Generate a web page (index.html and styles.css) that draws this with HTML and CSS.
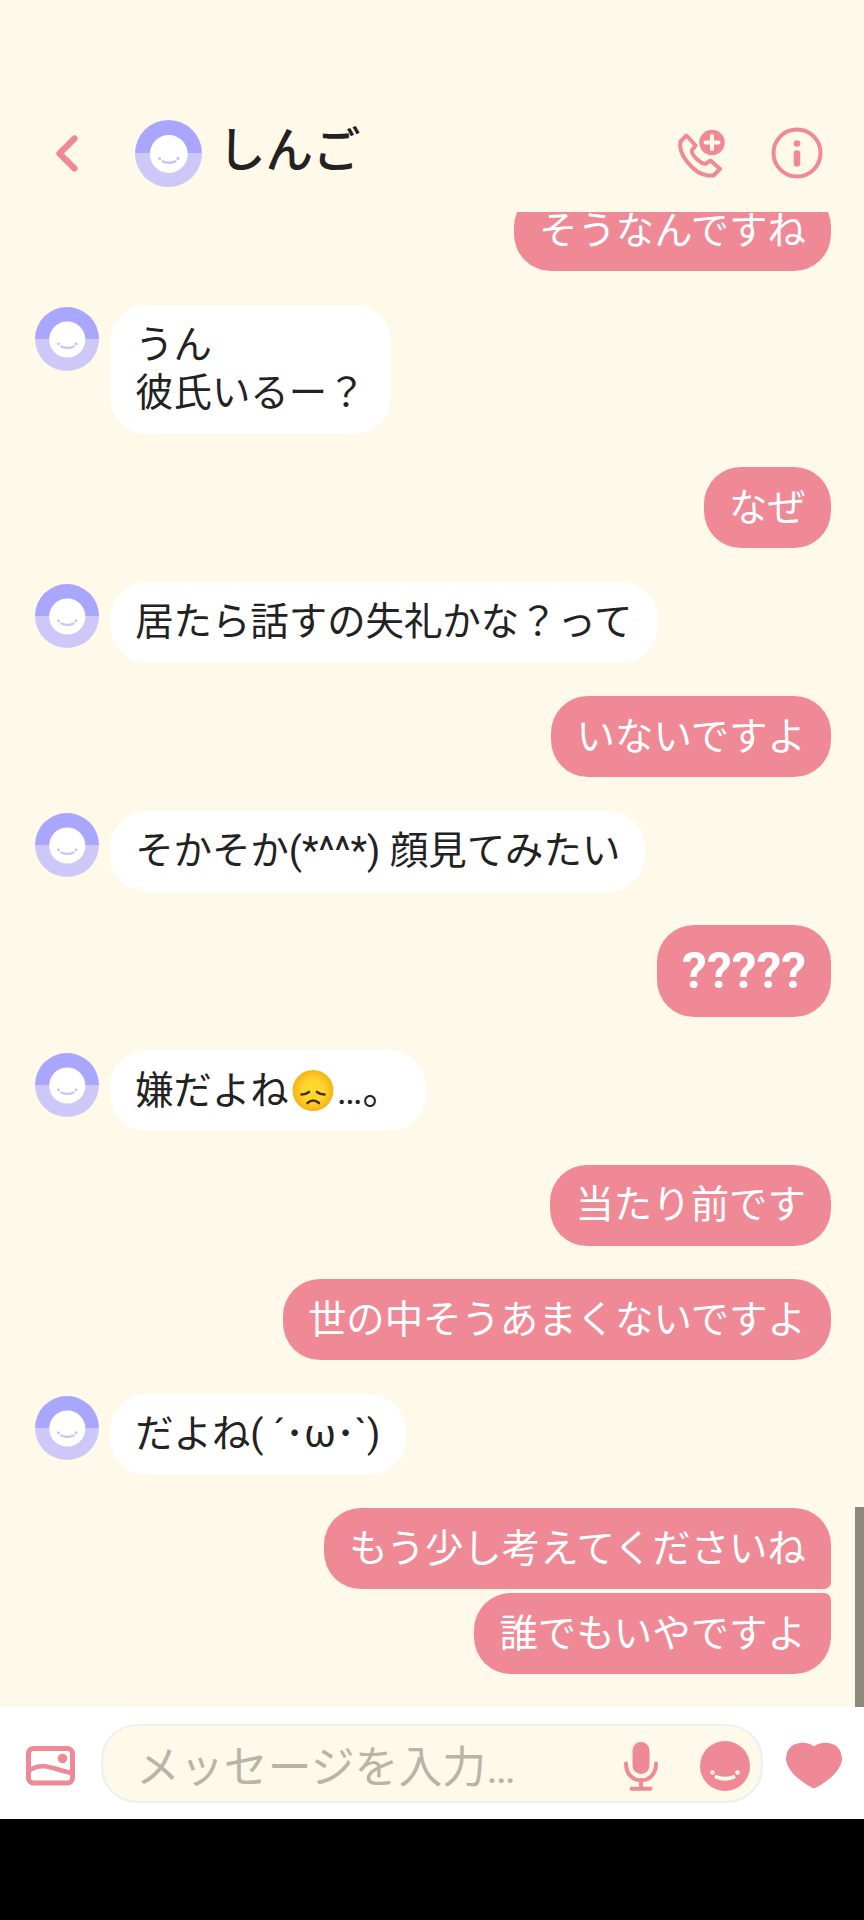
FILE: index.html
```
<!DOCTYPE html>
<html lang="ja">
<head>
<meta charset="utf-8">
<title>しんご</title>
<link rel="stylesheet" href="styles.css">
</head>
<body>
<svg class="defs" aria-hidden="true">
  <symbol id="avatar" viewBox="0 0 68 68">
    <path d="M0 34a34 34 0 0 1 68 0z" fill="#a9a6ff"/>
    <path d="M0 34a34 34 0 0 0 68 0z" fill="#cdc8f8"/>
    <circle cx="34.3" cy="34.5" r="19.2" fill="#fff"/>
    <circle cx="25" cy="39" r="1.6" fill="#c9c5fa"/>
    <circle cx="43.6" cy="39" r="1.6" fill="#c9c5fa"/>
    <path d="M28 42q6.300 3 13 0" fill="none" stroke="#c9c5fa" stroke-width="2.500" stroke-linecap="round"/>
  </symbol>
</svg>
<div class="app">
  <header class="header">
    <svg class="back" viewBox="0 0 22 37"><path d="M18.500 3.500L3.500 18.500l15 15" fill="none" stroke="#f08996" stroke-width="6.200" stroke-linecap="round" stroke-linejoin="round"/></svg>
    <svg class="header-avatar"><use href="#avatar"/></svg>
    <h1 class="name">しんご</h1>
    <svg class="call" viewBox="0 0 48 50">
      <path d="M8.500 5.500L2.500 11.500C-.5 24 16 44.500 30 45.500h5.500l6.500-6.500L32.500 30.500l-4.500 3.200C23 34.500 13.500 25 13.800 20.500L17.500 15.500z" fill="none" stroke="#f08996" stroke-width="4" stroke-linejoin="round"/>
      <circle cx="34" cy="12.500" r="14" fill="#fff9ea"/>
      <circle cx="34" cy="12.500" r="12.700" fill="#f08996"/>
      <path d="M34 6v13M27.500 12.500h13" stroke="#fff9ea" stroke-width="4" stroke-linecap="round"/>
    </svg>
    <svg class="info" viewBox="0 0 52 52">
      <circle cx="26" cy="26" r="23.500" fill="none" stroke="#f08996" stroke-width="4"/>
      <circle cx="26" cy="16.500" r="3.300" fill="#f08996"/>
      <path d="M26 26.500v10" stroke="#f08996" stroke-width="6.500" stroke-linecap="round"/>
    </svg>
  </header>

  <main class="thread">
    <div class="row mine"><p class="bubble">そうなんですね</p></div>
    <div class="row"><svg class="avatar"><use href="#avatar"/></svg><p class="bubble">うん<br>彼氏いるー？</p></div>
    <div class="row mine"><p class="bubble">なぜ</p></div>
    <div class="row"><svg class="avatar"><use href="#avatar"/></svg><p class="bubble">居たら話すの失礼かな？って</p></div>
    <div class="row mine"><p class="bubble">いないですよ</p></div>
    <div class="row"><svg class="avatar"><use href="#avatar"/></svg><p class="bubble">そかそか(*^^*) 顔見てみたい</p></div>
    <div class="row mine"><p class="bubble large">?????</p></div>
    <div class="row"><svg class="avatar"><use href="#avatar"/></svg><p class="bubble">嫌だよね<svg class="emoji" viewBox="0 0 42 42" role="img" aria-label="がっかり">
      <defs><radialGradient id="face"><stop offset=".5" stop-color="#ffd72e"/><stop offset="1" stop-color="#f5b316"/></radialGradient></defs>
      <circle cx="21" cy="20.500" r="20.500" fill="url(#face)"/>
      <path d="M9.500 24.500q4.500 0 7.500-2.500M25 22q3 2.500 7.500 2.500M15.500 33q5.500-5 11.500 0" fill="none" stroke="#463019" stroke-width="2.600" stroke-linecap="round"/>
    </svg>…。</p></div>
    <div class="row mine"><p class="bubble">当たり前です</p></div>
    <div class="row mine"><p class="bubble">世の中そうあまくないですよ</p></div>
    <div class="row"><svg class="avatar"><use href="#avatar"/></svg><p class="bubble">だよね( ´･ω･`)</p></div>
    <div class="row mine"><p class="bubble first">もう少し考えてくださいね</p></div>
    <div class="row mine joined"><p class="bubble last">誰でもいやですよ</p></div>
    <div class="scrollbar"></div>
  </main>

  <footer class="composer">
    <svg class="photo" viewBox="0 0 49 40">
      <rect x="2.500" y="2.500" width="44" height="34.500" rx="5" fill="none" stroke="#f08996" stroke-width="5"/>
      <circle cx="36.500" cy="12.500" r="4.800" fill="#f08996"/>
      <path d="M3 24.500C17 15 28 23.500 46 27" fill="none" stroke="#f08996" stroke-width="4.500"/>
    </svg>
    <div class="field">
      <span class="placeholder">メッセージを入力…</span>
      <svg class="mic" viewBox="0 0 34 50">
        <rect x="8.500" y="0" width="17" height="32" rx="8.500" fill="#f08996"/>
        <path d="M2 21.500C2 44 32 44 32 21.500M17 38v8M7.500 46.700h19" fill="none" stroke="#f08996" stroke-width="4" stroke-linecap="round"/>
      </svg>
      <svg class="smile" viewBox="0 0 50 50">
        <circle cx="25" cy="25" r="25" fill="#f08996"/>
        <circle cx="12.500" cy="31.500" r="2.300" fill="#fff9ea"/>
        <circle cx="37.500" cy="31.500" r="2.300" fill="#fff9ea"/>
        <path d="M16.500 36q8.500 3.600 17 0" fill="none" stroke="#fff9ea" stroke-width="4" stroke-linecap="round"/>
      </svg>
    </div>
    <svg class="heart" viewBox="0 0 56 47"><path d="M28 4.500C36-2 56-1 56 17.500 55 30 38 42 28 46.500 18 42 1 30 0 17.500 0-1 20-2 28 4.500z" fill="#f08996"/></svg>
  </footer>
  <div class="navbar"></div>
</div>
</body>
</html>
```
FILE: styles.css
```
* { box-sizing: border-box; }

body {
  margin: 0;
  background: #fff9ea;
  color: #222;
  font-family: Roboto, "Noto Sans CJK JP", sans-serif;
}

.defs { position: absolute; width: 0; height: 0; }
svg { display: block; flex: none; overflow: visible; }

.app {
  display: flex;
  flex-direction: column;
  width: 864px;
  height: 1920px;
  overflow: hidden;
}

.header {
  flex: none;
  display: flex;
  align-items: center;
  height: 212px;
  padding: 94px 41px 0 56px;
}
.back { width: 22px; height: 37px; }
.header-avatar { width: 67px; height: 67px; margin-left: 57px; }
.name {
  flex: 1;
  margin: -5px 0 0 16px;
  font-size: 47.500px;
  font-weight: 500;
  line-height: 60px;
}
.call { width: 48px; height: 50px; margin: 4px 45px 0 0; }
.info { width: 52px; height: 52px; }

.thread {
  position: relative;
  flex: 1;
  min-height: 0;
  display: flex;
  flex-direction: column;
  justify-content: flex-end;
  gap: 33.500px;
  padding: 0 33px 33px 35px;
  overflow: hidden;
}
.row { flex: none; display: flex; align-items: flex-start; }
.mine { justify-content: flex-end; }
.joined { margin-top: -29.500px; }
.avatar { width: 64px; height: 64px; margin: 2.500px 11px 0 0; }

.bubble {
  margin: 0;
  padding: 16.500px 25.200px;
  border-radius: 37px;
  background: #fff;
  font-size: 38.400px;
  line-height: 48px;
  white-space: nowrap;
}
.mine .bubble { background: #f08996; color: #fff; }
.mine .large { padding-right: 25px; padding-left: 25px; font-size: 49.800px; font-weight: 700; line-height: 58.500px; }
.first { border-bottom-right-radius: 7px; }
.last { border-top-right-radius: 7px; }
.emoji {
  display: inline-block;
  width: 42px;
  height: 42px;
  margin: 0 3px;
  vertical-align: -8px;
}

.scrollbar {
  position: absolute;
  right: 0;
  bottom: 0;
  width: 9px;
  height: 200px;
  background: #8b8979;
}

.composer {
  flex: none;
  display: flex;
  align-items: center;
  height: 112px;
  padding: 0 22px 0 26px;
  background: #fff;
}
.photo { width: 49px; height: 40px; margin-top: 6px; }
.field {
  flex: 1;
  display: flex;
  align-items: center;
  height: 79px;
  margin: 0 23px 0 26px;
  padding: 0 11px 0 33px;
  border: 2px solid #efeff1;
  border-radius: 36px;
  background: #fff9ea;
}
.placeholder {
  flex: 1;
  margin-top: 9px;
  color: #b9b5a5;
  font-size: 43.900px;
  font-weight: 400;
  line-height: 60px;
  white-space: nowrap;
}
.mic { width: 34px; height: 50px; margin: 8px 42px 0 0; }
.smile { width: 50px; height: 50px; margin-top: 5px; }
.heart { width: 56px; height: 47px; margin-top: 5px; }

.navbar { flex: none; height: 101px; background: #000; }
```
